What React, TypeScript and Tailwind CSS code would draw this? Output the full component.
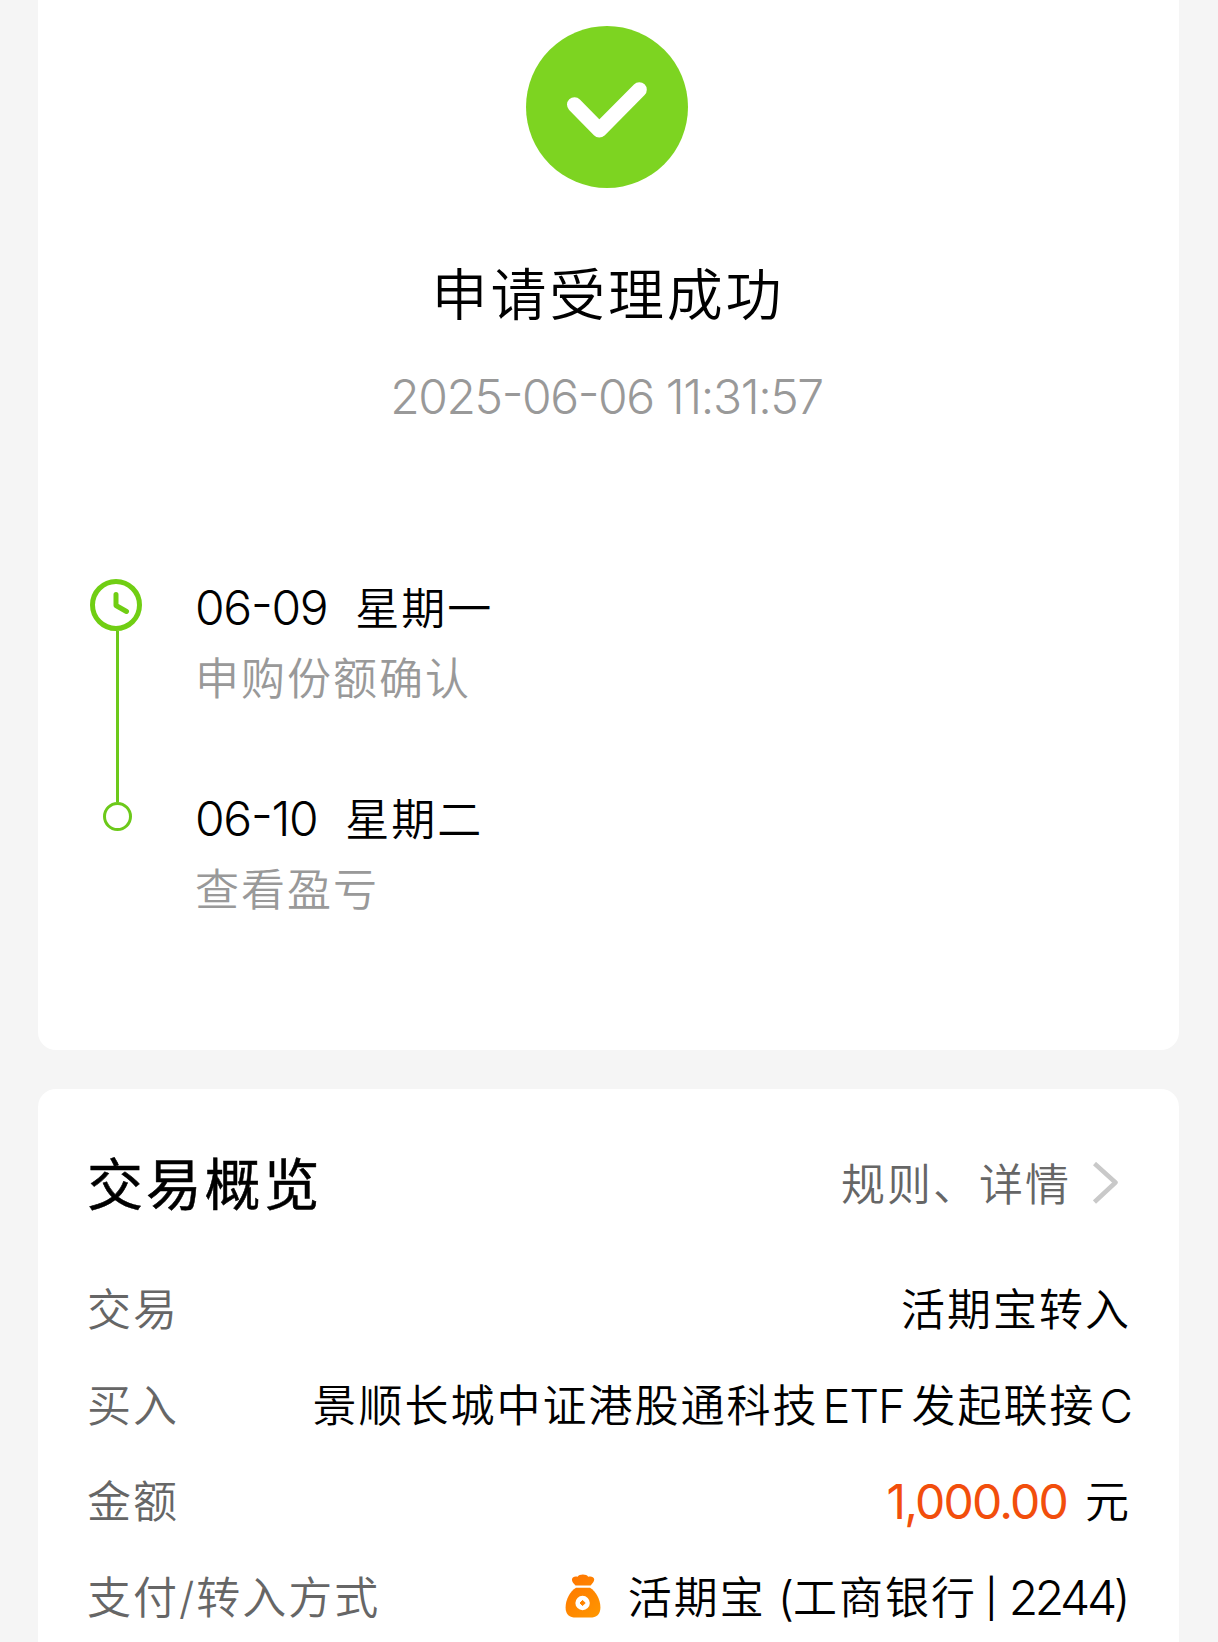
import type { ReactNode } from "react";

const SuccessIcon = () => (
  <svg width="162" height="162" viewBox="0 0 162 162" fill="none">
    <circle cx="81" cy="81" r="81" fill="#7dd421" />
    <path
      d="M48.5 78.7L73.3 104.1L113.3 63.7"
      stroke="#fff"
      strokeWidth="15"
      strokeLinecap="round"
      strokeLinejoin="round"
    />
  </svg>
);

const ClockIcon = () => (
  <svg width="52" height="52" viewBox="0 0 52 52" fill="none" stroke="#70ce13">
    <circle cx="26" cy="26" r="23.5" strokeWidth="5" />
    <path d="M26 15.5V26.5L36.5 32.5" strokeWidth="5" strokeLinecap="round" strokeLinejoin="round" />
  </svg>
);

const ChevronIcon = () => (
  <svg width="26" height="42" viewBox="0 0 26 42" fill="none">
    <path d="M1.5 1.5L22.5 20.5L1.5 40" stroke="#c9c9c9" strokeWidth="4.5" strokeLinejoin="round" />
  </svg>
);

const MoneyBagIcon = () => (
  <svg className="mb-[4px]" width="36" height="44" viewBox="0 0 36 44" fill="none">
    <defs>
      <linearGradient id="bag" x1="0" y1="0" x2="36" y2="44" gradientUnits="userSpaceOnUse">
        <stop stopColor="#ff7200" />
        <stop offset="1" stopColor="#ff9800" />
      </linearGradient>
    </defs>
    <path
      d="M10.5 11.6C8.5 9.4 6.6 7.5 7 5.2C7.4 2.8 10.2 1.8 12.6 2.8C14 -.2 21.8 -.2 23.2 2.8C25.8 1.8 28.8 2.8 29.2 5.2C29.4 7.5 27.5 9.4 25.6 11.6Z"
      fill="url(#bag)"
    />
    <path
      d="M11 13.8H25C31 17.5 35.4 25.5 35.4 33.5C35.4 40.5 31.5 43.6 25 43.6H11C4.4 43.6 .6 40.5 .6 33.5C.6 25.5 5 17.5 11 13.8Z"
      fill="url(#bag)"
    />
    <circle cx="17.6" cy="29" r="7.2" fill="#fff" />
    <path d="M17.6 26.4L20.2 29L17.6 31.6L15 29Z" fill="#ff8400" stroke="#ff8400" strokeLinejoin="round" />
  </svg>
);

// Hyphens sit at half the height of the digits
const DateText = ({ value }: { value: string }) =>
  value.split("-").map((part, i) => (
    <span key={i}>
      {i > 0 && <span className="align-[5px] leading-none">-</span>}
      {part}
    </span>
  ));

const Step = ({ date, day, note }: { date: string; day: string; note: string }) => (
  <>
    <p className="h-[56px]">
      <span className="mr-[28px] text-[48px] font-light tracking-[-1.3px]">
        <DateText value={date} />
      </span>
      {day}
    </p>
    <p className="mt-[16px] text-[#999]">{note}</p>
  </>
);

const Row = ({ label, children }: { label: string; children: ReactNode }) => (
  <div className="flex h-24 items-center justify-between">
    <span className="pl-px text-[#666]">{label}</span>
    <div className="flex items-center">{children}</div>
  </div>
);

export default function App() {
  return (
    <div className="flex h-[1642px] w-[1218px] flex-col overflow-hidden bg-[#f5f5f5] px-[38px] font-['Inter','Noto_Sans_CJK_SC_DemiLight','Noto_Sans_CJK_SC',sans-serif] text-[44px] leading-[56px] font-[350] tracking-[2px] whitespace-nowrap text-black">
      {/* Result */}
      <section className="h-[1050px] w-[1141px] shrink-0 rounded-b-[18px] bg-white px-12 pt-[26px]">
        <div className="flex flex-col items-center pr-[3px]">
          <SuccessIcon />
          <h1 className="mt-[67px] pl-[2px] text-[56px] leading-[80px] font-[350] tracking-[2.8px]">申请受理成功</h1>
          <p className="mt-[33px] h-[56px] pr-px text-[48px] font-light tracking-[-1.4px] text-[#999]">
            <DateText value="2025-06-06 11:31:57" />
          </p>
        </div>

        {/* Timeline */}
        <div className="mt-[155px] pl-[4px]">
          <div className="flex h-[223px]">
            <div className="flex w-[52px] flex-col items-center">
              <ClockIcon />
              <div className="ml-[3px] w-[3px] flex-1 bg-[#6cc91a]" />
            </div>
            <div className="ml-[53px]">
              <Step date="06-09" day="星期一" note="申购份额确认" />
            </div>
          </div>
          <div className="flex">
            <div className="flex w-[52px] flex-col items-center">
              <div className="ml-[3px] size-[29px] rounded-full border-[3px] border-[#6cc91a]" />
            </div>
            <div className="-mt-[12px] ml-[53px]">
              <Step date="06-10" day="星期二" note="查看盈亏" />
            </div>
          </div>
        </div>
      </section>

      {/* Overview */}
      <section className="mt-[39px] h-[600px] w-[1141px] shrink-0 rounded-t-[18px] bg-white px-12 pt-[54px]">
        <div className="flex h-20 items-center justify-between">
          <h2 className="pb-[5px] pl-px font-['Noto_Sans_CJK_SC',sans-serif] text-[56px] leading-[80px] font-normal tracking-[2.8px] [-webkit-text-stroke:0.5px_black]">
            交易概览
          </h2>
          <div className="flex items-center gap-[22px] pr-[12px] text-[#666]">
            <span className="pt-[3px]">规则、详情</span>
            <ChevronIcon />
          </div>
        </div>
        <div className="mt-[39px]">
          <Row label="交易">活期宝转入</Row>
          <Row label="买入">
            景顺长城中证港股通科技
            <span className="ml-[4px] text-[47px] font-light tracking-[-1.2px]">ETF</span>
            <span className="ml-[7px]">发起联接</span>
            <span className="ml-[4px] text-[46px] font-light tracking-[-2px]">C</span>
          </Row>
          <Row label="金额">
            <span className="text-[48px] font-normal tracking-[-1.8px] text-[#f24e0c]">1,000.00</span>
            <span className="ml-[18px]">元</span>
          </Row>
          <Row label="支付/转入方式">
            <MoneyBagIcon />
            <span className="ml-[27px]">活期宝</span>
            <span className="ml-[12px] text-[47px] font-light tracking-[-1px]">(</span>工商银行
            <span className="ml-[8px] text-[38px] font-normal">|</span>
            <span className="ml-[9px] pr-[4px] text-[48px] font-light tracking-[-3.4px]">2244)</span>
          </Row>
        </div>
      </section>
    </div>
  );
}
